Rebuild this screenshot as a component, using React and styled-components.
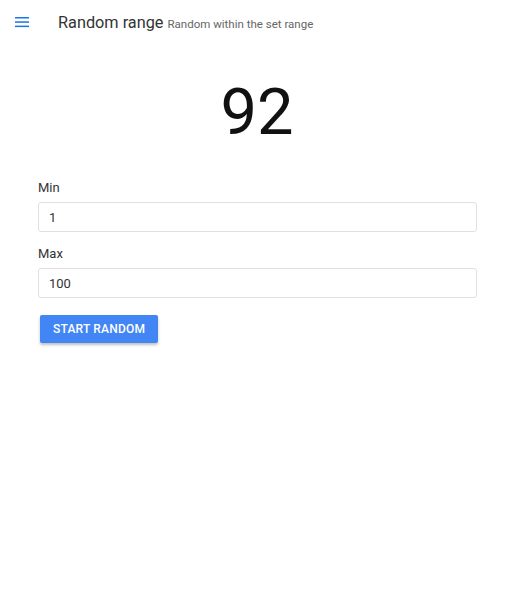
import styled, { createGlobalStyle } from 'styled-components';

const GlobalStyle = createGlobalStyle`
  html, body {
    margin: 0;
    padding: 0;
    background: #fff;
    font-family: Roboto, 'Noto Sans', sans-serif;
  }
`;

const Page = styled.div`
  width: 508px;
  min-height: 592px;
  background: #fff;
`;

const Header = styled.header`
  display: flex;
  align-items: center;
  height: 44px;
  padding: 0 0 0 15px;
`;

const MenuButton = styled.button`
  display: flex;
  align-items: center;
  justify-content: center;
  width: 14px;
  height: 14px;
  padding: 0;
  margin-right: 29px;
  border: 0;
  background: none;
  color: #1a73e8;
  cursor: pointer;
`;

const Title = styled.h1`
  margin: 0;
  font-size: 16.3px;
  font-weight: 400;
  color: #333;
`;

const Subtitle = styled.span`
  margin-left: 4px;
  font-size: 11.5px;
  color: #666;
`;

const Result = styled.div`
  margin-top: 30px;
  padding-left: 6px;
  text-align: center;
  font-size: 65px;
  font-weight: 400;
  line-height: 76px;
  color: #111;
`;

const Form = styled.div`
  padding: 30px 31px 0 38px;
`;

const Label = styled.label`
  display: block;
  font-size: 13px;
  color: #333;
  margin-bottom: 7px;
`;

const Field = styled.div`
  margin-bottom: ${(p) => p.$gap}px;
`;

const Input = styled.input`
  box-sizing: border-box;
  width: 100%;
  height: 30px;
  padding: 0 10px;
  border: 1px solid #e0e0e0;
  border-radius: 3px;
  font-family: inherit;
  font-size: 13px;
  color: #333;
  outline: none;
`;

const Button = styled.button`
  margin-left: 2px;
  height: 28px;
  padding: 0 13px;
  border: 0;
  border-radius: 2px;
  background: #4285f4;
  color: #fff;
  font-family: inherit;
  font-size: 12px;
  font-weight: 500;
  letter-spacing: 0.2px;
  text-transform: uppercase;
  box-shadow: 0 2px 3px rgba(0, 0, 0, 0.25);
  cursor: pointer;
`;

const MenuIcon = () => (
  <svg width='14' height='12' viewBox='0 0 14 12'>
    <rect x='0' y='1' width='14' height='1.5' fill='currentColor' />
    <rect x='0' y='5.3' width='14' height='1.5' fill='currentColor' />
    <rect x='0' y='9.6' width='14' height='1.5' fill='currentColor' />
  </svg>
);

const App = () => (
  <Page>
    <GlobalStyle />
    <Header>
      <MenuButton aria-label='menu'>
        <MenuIcon />
      </MenuButton>
      <Title>
        Random range<Subtitle>Random within the set range</Subtitle>
      </Title>
    </Header>
    <Result>92</Result>
    <Form>
      <Field $gap={14}>
        <Label>Min</Label>
        <Input defaultValue='1' />
      </Field>
      <Field $gap={17}>
        <Label>Max</Label>
        <Input defaultValue='100' />
      </Field>
      <Button>Start random</Button>
    </Form>
  </Page>
);

export default App;
